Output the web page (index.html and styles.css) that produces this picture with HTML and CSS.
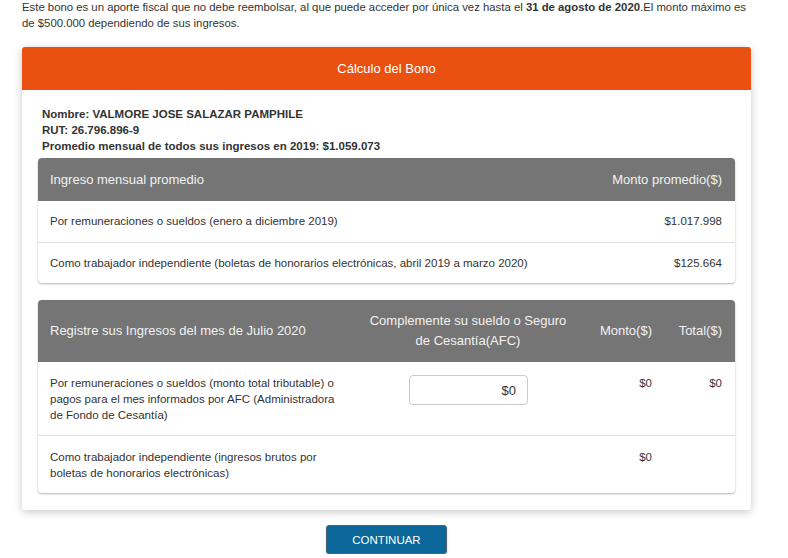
FILE: index.html
```html
<!DOCTYPE html>
<html lang="es">
<head>
<meta charset="utf-8">
<title>Cálculo del Bono</title>
<link rel="stylesheet" href="styles.css">
</head>
<body>
<div class="page">
  <p class="intro">Este bono es un aporte fiscal que no debe reembolsar, al que puede acceder por única vez hasta el <b>31 de agosto de 2020</b>.El monto máximo es de $500.000 dependiendo de sus ingresos.</p>

  <section class="card">
    <header class="card-head">Cálculo del Bono</header>
    <div class="card-body">
      <div class="info">
        <div>Nombre: VALMORE JOSE SALAZAR PAMPHILE</div>
        <div>RUT: 26.796.896-9</div>
        <div>Promedio mensual de todos sus ingresos en 2019: $1.059.073</div>
      </div>

      <div class="tbl tbl-avg">
        <div class="tr th">
          <div>Ingreso mensual promedio</div>
          <div class="r">Monto promedio($)</div>
        </div>
        <div class="tr td">
          <div>Por remuneraciones o sueldos (enero a diciembre 2019)</div>
          <div class="r">$1.017.998</div>
        </div>
        <div class="tr td">
          <div>Como trabajador independiente (boletas de honorarios electrónicas, abril 2019 a marzo 2020)</div>
          <div class="r">$125.664</div>
        </div>
      </div>

      <div class="tbl tbl-reg">
        <div class="tr th">
          <div class="c1">Registre sus Ingresos del mes de Julio 2020</div>
          <div class="c2">Complemente su sueldo o Seguro de Cesantía(AFC)</div>
          <div class="c3">Monto($)</div>
          <div class="c4">Total($)</div>
        </div>
        <div class="tr td">
          <div class="c1">Por remuneraciones o sueldos (monto total tributable) o pagos para el mes informados por AFC (Administradora de Fondo de Cesantía)</div>
          <div class="c2"><input class="amount" type="text" value="$0"></div>
          <div class="c3">$0</div>
          <div class="c4">$0</div>
        </div>
        <div class="tr td">
          <div class="c1">Como trabajador independiente (ingresos brutos por boletas de honorarios electrónicas)</div>
          <div class="c2"></div>
          <div class="c3">$0</div>
          <div class="c4"></div>
        </div>
      </div>
    </div>
  </section>

  <div class="actions">
    <button class="btn" type="button">CONTINUAR</button>
  </div>
</div>
</body>
</html>
```

FILE: styles.css
```css
* { box-sizing: border-box; }

html, body {
  margin: 0;
  padding: 0;
  background: #ffffff;
}

body {
  font-family: "Liberation Sans", Arial, sans-serif;
  color: #333333;
}

.page {
  width: 729px;
  margin-left: 22px;
}

.intro {
  margin: -1px 0 0 0;
  font-size: 11.35px;
  line-height: 16px;
  color: #333333;
}

.intro b { font-weight: bold; }

.card {
  margin-top: 16px;
  background: #ffffff;
  border-radius: 3px;
  box-shadow: 0 2px 8px rgba(0, 0, 0, 0.22);
}

.card-head {
  height: 43px;
  background: #ea5010;
  color: #ffffff;
  font-size: 13px;
  display: flex;
  align-items: center;
  justify-content: center;
  border-radius: 3px 3px 0 0;
}

.card-body {
  padding: 16px 16px 17px 16px;
}

.info {
  padding: 0 4px;
  font-size: 11.5px;
  font-weight: bold;
  line-height: 16px;
  color: #333333;
}

.tbl {
  background: #ffffff;
  border-radius: 4px;
  box-shadow: 0 1px 2px rgba(0, 0, 0, 0.3);
  overflow: hidden;
}

.tbl-avg { margin-top: 4px; }
.tbl-reg { margin-top: 17px; }

.tr {
  display: grid;
}

.th {
  background: #757575;
  color: #f2f2f2;
  font-size: 13px;
  line-height: 20px;
  align-items: center;
}

.td {
  font-size: 11.5px;
  line-height: 16px;
  color: #333333;
  border-top: 1px solid #e0e0e0;
}

.tbl-avg .tr {
  grid-template-columns: 1fr auto;
  padding: 0 13px 0 12px;
}

.tbl-avg .th { height: 43px; }
.tbl-avg .td { padding-top: 12px; padding-bottom: 12px; }
.tbl-avg .th + .td { border-top: none; }
.tbl-avg .td:nth-child(2) { padding-top: 12px; padding-bottom: 13px; }

.r { text-align: right; }

.tbl-reg .tr {
  grid-template-columns: 317px 227px 83px 1fr;
}

.tbl-reg .tr > div {
  padding-left: 12px;
  padding-right: 13px;
}

.tbl-reg .th { height: 62px; }
.tbl-reg .td { align-items: start; }
.tbl-reg .td > div { padding-top: 13px; padding-bottom: 12px; }
.tbl-reg .th + .td { border-top: none; }

.tbl-reg .c2 { text-align: center; }
.tbl-reg .c3, .tbl-reg .c4 { text-align: right; }
.tbl-reg .td .c2 { display: flex; justify-content: center; padding-left: 13px; padding-right: 13px; }

.amount {
  width: 119px;
  height: 30px;
  border: 1px solid #cccccc;
  border-radius: 4px;
  padding: 0 11px;
  font-family: "Liberation Sans", Arial, sans-serif;
  font-size: 13px;
  color: #333333;
  text-align: right;
  background: #ffffff;
  outline: none;
}

.actions {
  display: flex;
  justify-content: center;
  margin-top: 15px;
}

.btn {
  width: 121px;
  height: 29px;
  background: #0b6699;
  color: #ffffff;
  border: 1px solid #4d6573;
  border-radius: 3px;
  font-family: "Liberation Sans", Arial, sans-serif;
  font-size: 11.5px;
  box-shadow: 0 1px 2px rgba(0, 0, 0, 0.25);
  padding: 0;
}
```
